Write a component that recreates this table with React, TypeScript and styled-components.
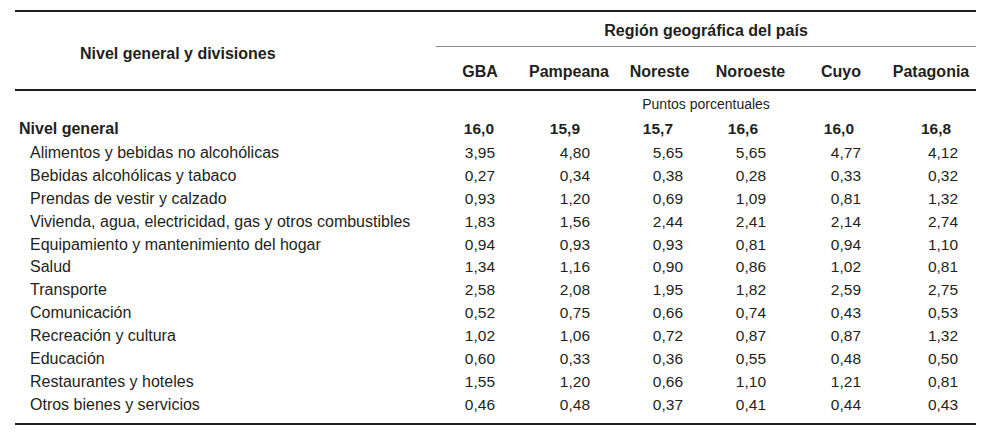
import React from "react";
import styled, { createGlobalStyle } from "styled-components";

type Column = { name: string; width: number; pad: number; boldPad: number };

const columns: Column[] = [
  { name: "GBA", width: 88, pad: 29, boldPad: 30 },
  { name: "Pampeana", width: 90, pad: 24, boldPad: 34 },
  { name: "Noreste", width: 91, pad: 22, boldPad: 32 },
  { name: "Noroeste", width: 91, pad: 30, boldPad: 38 },
  { name: "Cuyo", width: 90, pad: 25, boldPad: 32 },
  { name: "Patagonia", width: 90, pad: 18, boldPad: 25 },
];

const total = ["16,0", "15,9", "15,7", "16,6", "16,0", "16,8"];

const rows: [string, string[]][] = [
  ["Alimentos y bebidas no alcohólicas", ["3,95", "4,80", "5,65", "5,65", "4,77", "4,12"]],
  ["Bebidas alcohólicas y tabaco", ["0,27", "0,34", "0,38", "0,28", "0,33", "0,32"]],
  ["Prendas de vestir y calzado", ["0,93", "1,20", "0,69", "1,09", "0,81", "1,32"]],
  ["Vivienda, agua, electricidad, gas y otros combustibles", ["1,83", "1,56", "2,44", "2,41", "2,14", "2,74"]],
  ["Equipamiento y mantenimiento del hogar", ["0,94", "0,93", "0,93", "0,81", "0,94", "1,10"]],
  ["Salud", ["1,34", "1,16", "0,90", "0,86", "1,02", "0,81"]],
  ["Transporte", ["2,58", "2,08", "1,95", "1,82", "2,59", "2,75"]],
  ["Comunicación", ["0,52", "0,75", "0,66", "0,74", "0,43", "0,53"]],
  ["Recreación y cultura", ["1,02", "1,06", "0,72", "0,87", "0,87", "1,32"]],
  ["Educación", ["0,60", "0,33", "0,36", "0,55", "0,48", "0,50"]],
  ["Restaurantes y hoteles", ["1,55", "1,20", "0,66", "1,10", "1,21", "0,81"]],
  ["Otros bienes y servicios", ["0,46", "0,48", "0,37", "0,41", "0,44", "0,43"]],
];

const GlobalStyle = createGlobalStyle`
  html, body {
    margin: 0;
    padding: 0;
    background: #ffffff;
  }
`;

const Table = styled.table`
  margin: 10px 0 0 15px;
  width: 961px;
  table-layout: fixed;
  border-collapse: separate;
  border-spacing: 0;
  font-family: "Liberation Sans", Arial, Helvetica, sans-serif;
  color: #231f20;
`;

const Col = styled.col<{ $width: number }>`
  width: ${(p) => p.$width}px;
`;

const CornerHead = styled.th`
  border-top: 2px solid #231f20;
  border-bottom: 2px solid #231f20;
  padding: 7px 0 0 65px;
  text-align: left;
  vertical-align: middle;
  font-size: 16px;
  font-weight: 700;
  line-height: 20px;
`;

const RegionHead = styled.th`
  border-top: 2px solid #231f20;
  border-bottom: 1px solid #8c8c8c;
  padding: 9px 0 5px;
  text-align: center;
  font-size: 16px;
  font-weight: 700;
  line-height: 20px;
`;

const ColumnHead = styled.th`
  border-bottom: 2px solid #231f20;
  padding: 15px 0 7px;
  text-align: center;
  font-size: 16px;
  font-weight: 700;
  line-height: 20px;
  white-space: nowrap;
`;

const UnitCell = styled.td`
  padding: 2px 0 0;
  text-align: center;
  font-size: 14px;
  line-height: 22px;
`;

const LabelCell = styled.td<{ $bold?: boolean; $last?: boolean }>`
  padding: ${(p) => (p.$bold ? "2.5px 0 1.5px 4px" : "0 0 0 15px")};
  padding-bottom: ${(p) => (p.$last ? "6px" : p.$bold ? "1.5px" : "0")};
  font-size: 16px;
  font-weight: ${(p) => (p.$bold ? 700 : 400)};
  line-height: 22.9px;
  white-space: nowrap;
`;

const ValueCell = styled.td<{ $pad: number; $bold?: boolean; $last?: boolean }>`
  padding: ${(p) => (p.$bold ? "2.5px" : "0")} ${(p) => p.$pad}px 0 0;
  padding-bottom: ${(p) => (p.$last ? "6px" : p.$bold ? "1.5px" : "0")};
  text-align: right;
  font-size: 15.5px;
  font-weight: ${(p) => (p.$bold ? 700 : 400)};
  line-height: 22.9px;
`;

const BottomRow = styled.tr`
  td {
    border-bottom: 2px solid #231f20;
  }
`;

export default function App() {
  return (
    <>
      <GlobalStyle />
      <Table>
        <colgroup>
          <Col $width={421} />
          {columns.map((c) => (
            <Col key={c.name} $width={c.width} />
          ))}
        </colgroup>
        <thead>
          <tr>
            <CornerHead rowSpan={2}>Nivel general y divisiones</CornerHead>
            <RegionHead colSpan={6}>Región geográfica del país</RegionHead>
          </tr>
          <tr>
            {columns.map((c) => (
              <ColumnHead key={c.name}>{c.name}</ColumnHead>
            ))}
          </tr>
        </thead>
        <tbody>
          <tr>
            <td />
            <UnitCell colSpan={6}>Puntos porcentuales</UnitCell>
          </tr>
          <tr>
            <LabelCell $bold>Nivel general</LabelCell>
            {total.map((v, i) => (
              <ValueCell key={i} $bold $pad={columns[i].boldPad}>
                {v}
              </ValueCell>
            ))}
          </tr>
          {rows.map(([label, values], r) => {
            const last = r === rows.length - 1;
            const cells = (
              <>
                <LabelCell $last={last}>{label}</LabelCell>
                {values.map((v, i) => (
                  <ValueCell key={i} $pad={columns[i].pad} $last={last}>
                    {v}
                  </ValueCell>
                ))}
              </>
            );
            return last ? <BottomRow key={label}>{cells}</BottomRow> : <tr key={label}>{cells}</tr>;
          })}
        </tbody>
      </Table>
    </>
  );
}
